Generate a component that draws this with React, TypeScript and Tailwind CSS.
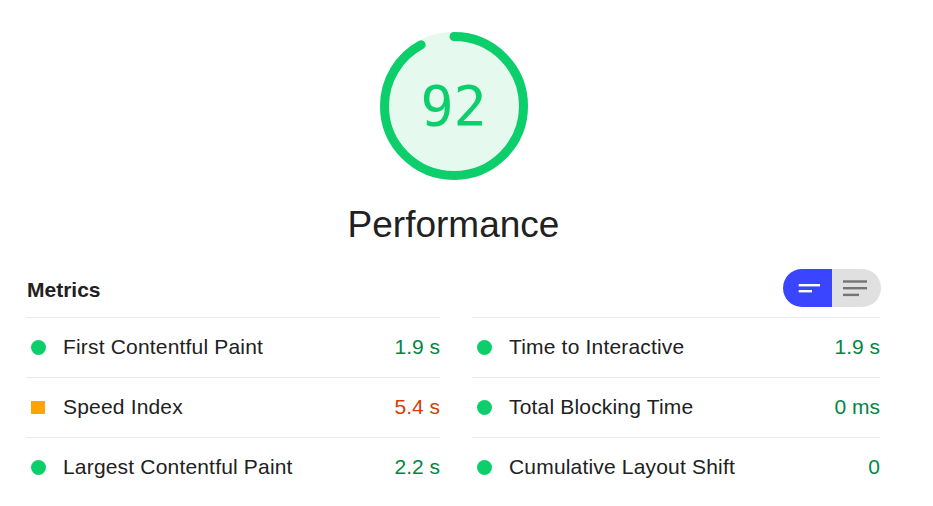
import React from 'react';

type Metric = { label: string; value: string; status: 'pass' | 'average' };

const leftMetrics: Metric[] = [
  { label: 'First Contentful Paint', value: '1.9 s', status: 'pass' },
  { label: 'Speed Index', value: '5.4 s', status: 'average' },
  { label: 'Largest Contentful Paint', value: '2.2 s', status: 'pass' },
];

const rightMetrics: Metric[] = [
  { label: 'Time to Interactive', value: '1.9 s', status: 'pass' },
  { label: 'Total Blocking Time', value: '0 ms', status: 'pass' },
  { label: 'Cumulative Layout Shift', value: '0', status: 'pass' },
];

function Gauge({ score }: { score: number }) {
  const r = 69.5;
  const c = 2 * Math.PI * r;
  return (
    <div className="relative w-[150px] h-[150px]">
      <svg width="150" height="150" viewBox="0 0 150 150">
        <circle cx="75" cy="75" r={r} fill="#e6f9ef" stroke="#e6f9ef" strokeWidth="9" />
        <circle
          cx="75"
          cy="75"
          r={r}
          fill="none"
          stroke="#0cce6b"
          strokeWidth="9"
          strokeLinecap="round"
          strokeDasharray={`${(score / 100) * c} ${c}`}
          transform="rotate(-90 75 75)"
        />
      </svg>
      <div className="absolute inset-0 flex items-center justify-center text-[#0cce6b] text-[55px] leading-none font-['DejaVu_Sans_Mono',monospace]">
        {score}
      </div>
    </div>
  );
}

function MetricRow({ m }: { m: Metric }) {
  return (
    <div className="flex items-center h-[59px] border-t border-[#e9e9e9] box-content">
      <div className="w-[37px] flex items-center pl-[5px]">
        {m.status === 'pass' ? (
          <span className="block w-[15px] h-[15px] rounded-full bg-[#0cce6b]" />
        ) : (
          <span className="block w-[14px] h-[13px] bg-[#ffa400]" />
        )}
      </div>
      <span className="flex-1 mb-[2px] leading-6 tracking-[0.18px] text-[#212121]">{m.label}</span>
      <span className={`mb-[2px] leading-6 ${m.status === 'pass' ? 'text-[#018642]' : 'text-[#d63c05]'}`}>
        {m.value}
      </span>
    </div>
  );
}

function Toggle() {
  return (
    <div className="flex h-[38px] rounded-full overflow-hidden">
      <div className="w-[49px] bg-[#3a45ff]">
        <svg width="49" height="38" viewBox="0 0 49 38">
          <rect x="15.7" y="15" width="21.3" height="2.4" fill="#fff" />
          <rect x="15.7" y="21" width="13.3" height="2.4" fill="#fff" />
        </svg>
      </div>
      <div className="w-[49px] bg-[#e0e0e0]">
        <svg width="49" height="38" viewBox="0 0 49 38">
          <rect x="11" y="11.3" width="24" height="2.4" fill="#757575" />
          <rect x="11" y="18" width="24" height="2.4" fill="#757575" />
          <rect x="11" y="24.7" width="16" height="2.4" fill="#757575" />
        </svg>
      </div>
    </div>
  );
}

export default function App() {
  return (
    <div className="w-[933px] h-[506px] bg-white overflow-hidden font-['Liberation_Sans',Arial,sans-serif] text-[#212121]">
      <div className="w-[855px] ml-[26px] pt-[31px] flex flex-col">
        <div className="flex flex-col items-center">
          <Gauge score={92} />
          <div className="mt-[24px] text-[37px] leading-[40px] text-[#212121]">Performance</div>
        </div>

        <div className="mt-[24px] flex items-center justify-between h-[38px]">
          <span className="text-[21px] font-bold leading-6 mt-[4px] pl-[1px]">Metrics</span>
          <Toggle />
        </div>

        <div className="mt-[10px] flex text-[21px]">
          <div className="w-[414px]">
            {leftMetrics.map((m) => (
              <MetricRow key={m.label} m={m} />
            ))}
          </div>
          <div className="w-[32px]" />
          <div className="w-[408px]">
            {rightMetrics.map((m) => (
              <MetricRow key={m.label} m={m} />
            ))}
          </div>
        </div>
      </div>
    </div>
  );
}
